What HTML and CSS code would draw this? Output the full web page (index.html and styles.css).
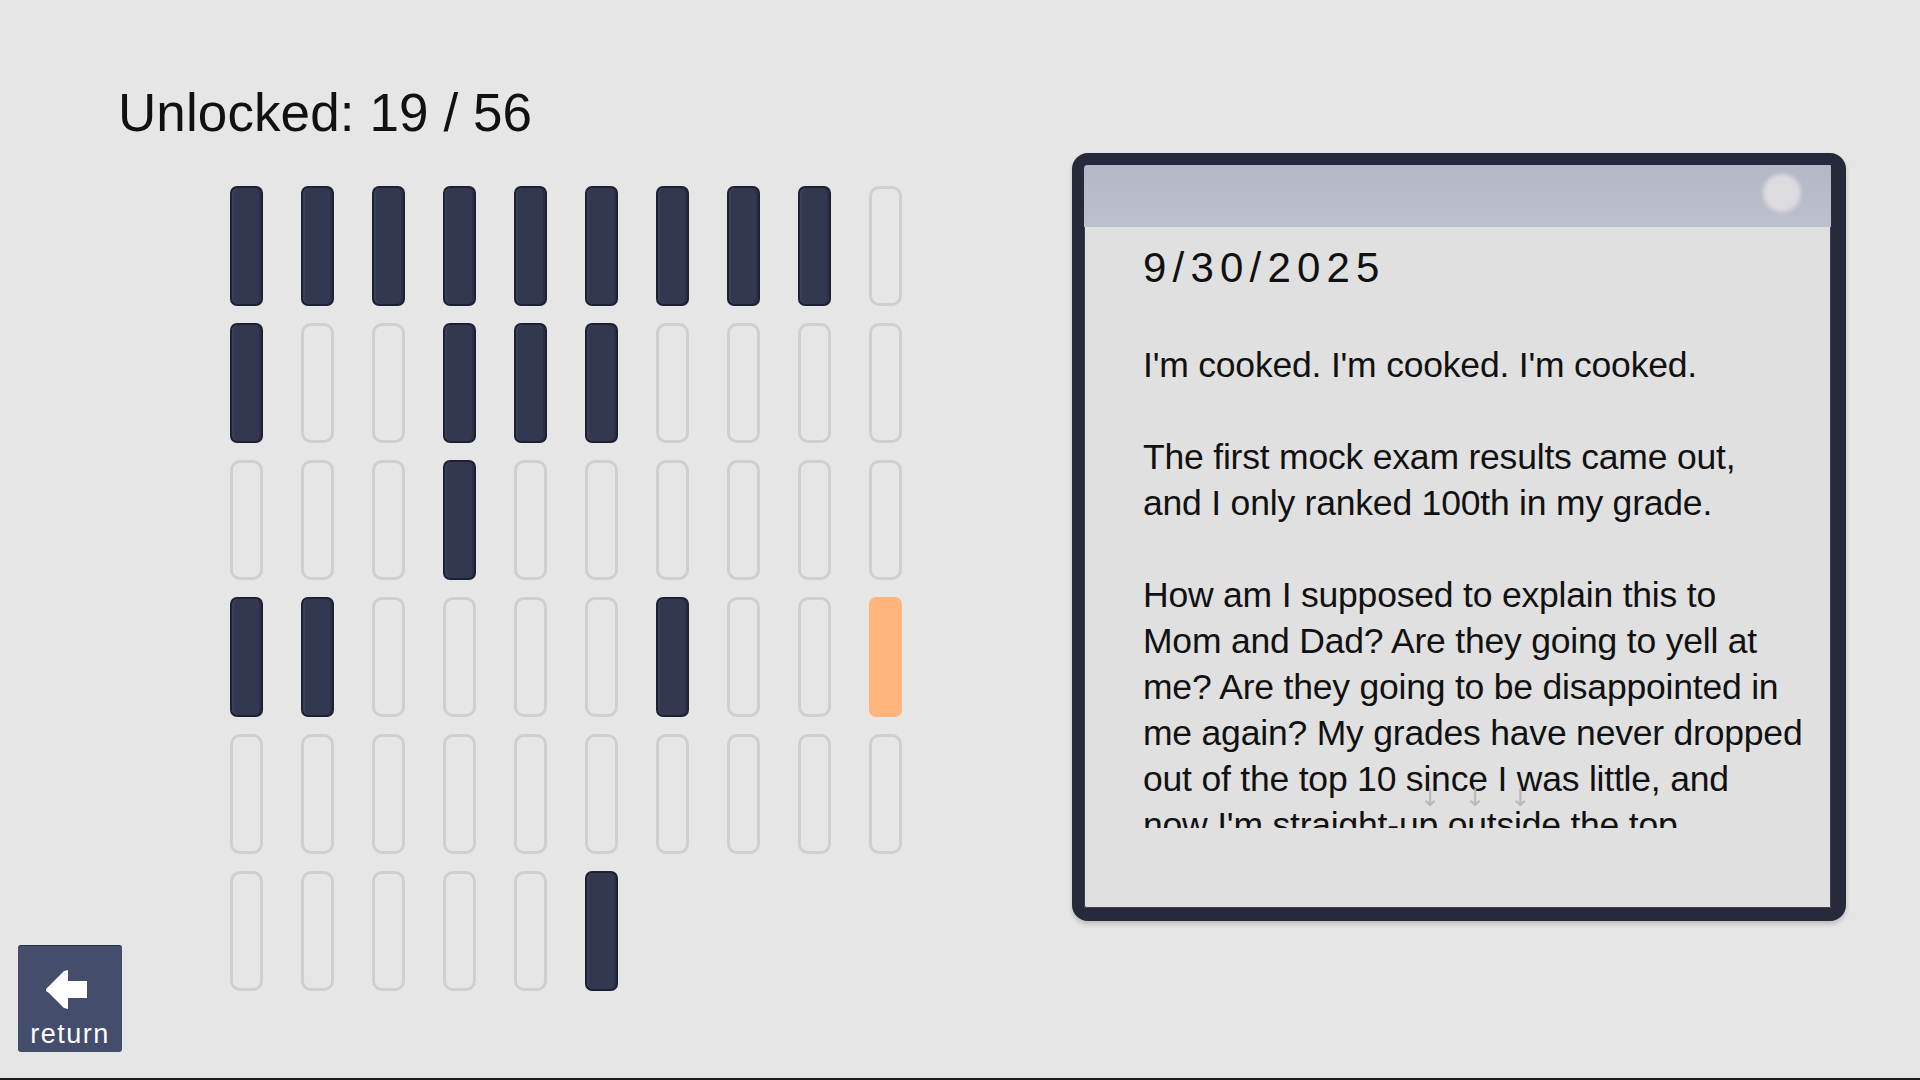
FILE: index.html
```html
<!DOCTYPE html>
<html lang="en">
<head>
  <meta charset="UTF-8" />
  <meta name="viewport" content="width=device-width, initial-scale=1.0"/>
  <title>Diary</title>
  <link rel="stylesheet" href="styles.css">
</head>
<body>
  <div class="screen">
    <section class="collection">
      <h1 class="count">Unlocked: 19 / 56</h1>

      <div class="slots">
        <!-- row 1 -->
        <div class="slot on"></div><div class="slot on"></div><div class="slot on"></div><div class="slot on"></div><div class="slot on"></div>
        <div class="slot on"></div><div class="slot on"></div><div class="slot on"></div><div class="slot on"></div><div class="slot"></div>
        <!-- row 2 -->
        <div class="slot on"></div><div class="slot"></div><div class="slot"></div><div class="slot on"></div><div class="slot on"></div>
        <div class="slot on"></div><div class="slot"></div><div class="slot"></div><div class="slot"></div><div class="slot"></div>
        <!-- row 3 -->
        <div class="slot"></div><div class="slot"></div><div class="slot"></div><div class="slot on"></div><div class="slot"></div>
        <div class="slot"></div><div class="slot"></div><div class="slot"></div><div class="slot"></div><div class="slot"></div>
        <!-- row 4 -->
        <div class="slot on"></div><div class="slot on"></div><div class="slot"></div><div class="slot"></div><div class="slot"></div>
        <div class="slot"></div><div class="slot on"></div><div class="slot"></div><div class="slot"></div><div class="slot current"></div>
        <!-- row 5 -->
        <div class="slot"></div><div class="slot"></div><div class="slot"></div><div class="slot"></div><div class="slot"></div>
        <div class="slot"></div><div class="slot"></div><div class="slot"></div><div class="slot"></div><div class="slot"></div>
        <!-- row 6 -->
        <div class="slot"></div><div class="slot"></div><div class="slot"></div><div class="slot"></div><div class="slot"></div>
        <div class="slot on"></div>
      </div>
    </section>

    <article class="diary">
      <div class="diary-bar"><span class="bar-dot"></span></div>
      <div class="diary-body">
        <h2 class="diary-date">9/30/2025</h2>
        <!-- lines are broken the same way the game lays them out -->
        <div class="diary-text">
          <p>I'm cooked. I'm cooked. I'm cooked.</p>
          <p>The first mock exam results came out,<br>and I only ranked 100th in my grade.</p>
          <p>How am I supposed to explain this to<br>Mom and Dad? Are they going to yell at<br>me? Are they going to be disappointed in<br>me again? My grades have never dropped<br>out of the top 10 since I was little, and<br>now I'm straight-up outside the top<br>hundred.</p>
        </div>
        <span class="more"><span>↓</span><span>↓</span><span>↓</span></span>
      </div>
    </article>

    <button class="btn-return">
      <svg class="arrow" width="42" height="40" viewBox="0 0 42 40">
        <polygon fill="#fff" points="0,19 3,16 6,13 9,10 12,7 15,4 18,1 22,0 22,11 41,11 41,28 22,28 22,39 18,38 15,35 12,32 9,29 6,26 3,23 0,21"/>
      </svg>
      <span>return</span>
    </button>
  </div>
</body>
</html>
```

FILE: styles.css
```css
body {
  margin: 0;
  font-family: 'Liberation Sans', Arial, sans-serif;
  color: #111;
  background: #e6e6e6;
}

.screen {
  position: relative;
  display: flex;
  width: 1920px;
  height: 1080px;
  box-sizing: border-box;
  padding-top: 83px;
  background: #e6e6e6;
  border-bottom: 2px solid #1c1c1e;
}

/* left side: counter + slot grid */
.collection {
  flex: 0 0 1072px;
}

.count {
  margin: 0 0 0 118px;
  font-size: 53px;
  font-weight: normal;
  line-height: 60px;
  letter-spacing: 0.1px;
}

.slots {
  display: grid;
  grid-template-columns: repeat(10, 33px);
  grid-auto-rows: 120px;
  column-gap: 38px;
  row-gap: 17px;
  margin: 43px 0 0 230px;
}

.slot {
  box-sizing: border-box;
  border: 3px solid #cfcfcf;
  border-radius: 10px;
}

.slot.on {
  border: 2px solid #1e2132;
  border-radius: 7px;
  background: #333851;
  box-shadow: inset 2px 0 0 #3b4059, inset -2px 0 0 #2c3047;
}

.slot.current {
  border: none;
  border-radius: 7px;
  background: #ffb57b;
}

/* diary window */
.diary {
  display: flex;
  flex-direction: column;
  width: 774px;
  height: 768px;
  margin-top: 70px;
  box-sizing: border-box;
  border: 12px solid #272a3b;
  border-right-width: 15px;
  border-bottom-width: 13px;
  border-radius: 16px;
  background: #e0e0e0;
  box-shadow: 0 3px 5px rgba(0, 0, 0, 0.18), inset 0 0 0 1px #3c3f55;
  overflow: hidden;
}

.diary-bar {
  display: flex;
  justify-content: flex-end;
  align-items: flex-start;
  height: 62px;
  padding-right: 30px;
  background: linear-gradient(#b4b7c7, #bcbfcd);
  flex-shrink: 0;
}

.bar-dot {
  width: 38px;
  height: 38px;
  margin-top: 9px;
  border-radius: 50%;
  background: #dcdbdf;
  filter: blur(2px);
}

.diary-body {
  position: relative;
  flex: 1;
  padding: 16px 0 0 59px;
}

.diary-date {
  margin: 0 0 49px;
  font-size: 42px;
  font-weight: normal;
  line-height: 50px;
  letter-spacing: 6.2px;
}

.diary-text {
  width: 700px;
  height: 486px;
  overflow: hidden;
  font-size: 35.5px;
  line-height: 46px;
  letter-spacing: -0.2px;
  white-space: nowrap;
}

.diary-text p {
  margin: 0 0 46px;
}

/* "more below" hint over the text */
.more {
  position: absolute;
  left: 336px;
  top: 557px;
  display: flex;
  gap: 25px;
  font-family: 'DejaVu Sans', sans-serif;
  font-size: 24px;
  color: #b9b9b9;
}

/* bottom-left return button */
.btn-return {
  position: absolute;
  left: 18px;
  bottom: 26px;
  display: flex;
  flex-direction: column;
  align-items: center;
  width: 104px;
  height: 107px;
  padding: 24px 0 0;
  box-sizing: border-box;
  border: none;
  border-top: 1px solid #2a2f45;
  border-radius: 3px;
  background: #444d6c;
  color: #fff;
  font-family: 'Liberation Sans', Arial, sans-serif;
  cursor: pointer;
}

.btn-return .arrow {
  margin-left: -6px;
}

.btn-return span {
  margin-top: 9px;
  font-size: 27px;
  line-height: 30px;
  letter-spacing: 1.5px;
}
```
